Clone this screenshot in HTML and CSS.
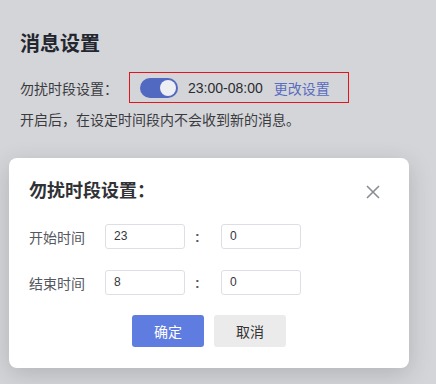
FILE: index.html
```html
<!DOCTYPE html>
<html lang="zh-CN">
<head>
<meta charset="utf-8">
<title>消息设置</title>
<link rel="stylesheet" href="styles.css">
</head>
<body>
<div class="page">
  <h1 class="title">消息设置</h1>
  <div class="row">
    <span class="row-label">勿扰时段设置：</span>
    <div class="highlight">
      <span class="switch"><span class="knob"></span></span>
      <span class="time">23:00-08:00</span>
      <a class="link">更改设置</a>
    </div>
  </div>
  <p class="desc">开启后，在设定时间段内不会收到新的消息。</p>
</div>

<div class="dialog">
  <h2 class="dialog-title">勿扰时段设置：</h2>
  <span class="close">
    <svg width="14" height="14" viewBox="0 0 14 14"><path d="M1 1L13 13M13 1L1 13" stroke="#8a8d93" stroke-width="1.6" fill="none"/></svg>
  </span>
  <div class="form">
    <div class="form-row">
      <span class="form-label">开始时间</span>
      <span class="input">23</span>
      <span class="sep">:</span>
      <span class="input">0</span>
    </div>
    <div class="form-row">
      <span class="form-label">结束时间</span>
      <span class="input">8</span>
      <span class="sep">:</span>
      <span class="input">0</span>
    </div>
  </div>
  <div class="actions">
    <button class="btn btn-primary">确定</button>
    <button class="btn btn-default">取消</button>
  </div>
</div>
</body>
</html>
```

FILE: styles.css
```css
* { box-sizing: border-box; }
html, body {
  margin: 0;
  padding: 0;
}
body {
  width: 436px;
  height: 384px;
  overflow: hidden;
  background: #d4d5d9;
  font-family: "Liberation Sans", "Noto Sans CJK SC", sans-serif;
  color: #2e2f33;
  position: relative;
}
.page {
  padding: 32px 20px 0 20px;
}
.title {
  margin: 0;
  font-size: 20px;
  line-height: 24px;
  font-weight: bold;
  color: #23262e;
}
.row {
  display: flex;
  align-items: center;
  margin-top: 16px;
  font-size: 14px;
}
.row-label {
  color: #3a3b3f;
  width: 109px;
}
.highlight {
  display: flex;
  align-items: center;
  height: 31px;
  width: 220px;
  border: 1px solid #e5141c;
  padding-left: 10px;
}
.switch {
  width: 38px;
  height: 20px;
  border-radius: 10px;
  background: #5169c1;
  display: flex;
  align-items: center;
  justify-content: flex-end;
  padding-right: 2px;
}
.knob {
  width: 16px;
  height: 16px;
  border-radius: 50%;
  background: #eeeff2;
}
.time {
  margin-left: 10px;
  color: #2b2c30;
}
.link {
  margin-left: 11px;
  color: #5a6cbf;
}
.desc {
  margin: 7px 0 0 0;
  font-size: 14px;
  line-height: 20px;
  color: #3a3b3f;
}
.dialog {
  position: absolute;
  left: 9px;
  top: 158px;
  width: 400px;
  height: 210px;
  background: #fff;
  border-radius: 8px;
  box-shadow: 0 6px 24px rgba(0, 0, 0, 0.16);
  padding: 21px 20px 0 20px;
}
.dialog-title {
  margin: 0;
  font-size: 18px;
  line-height: 24px;
  font-weight: bold;
  color: #303236;
}
.close {
  position: absolute;
  right: 29px;
  top: 27px;
  width: 14px;
  height: 14px;
  display: block;
}
.close svg { display: block; }
.form {
  margin-top: 21px;
  display: flex;
  flex-direction: column;
  gap: 21px;
}
.form-row {
  display: flex;
  align-items: center;
  height: 25px;
}
.form-label {
  width: 76px;
  font-size: 14px;
  color: #555860;
}
.input {
  width: 80px;
  height: 25px;
  border: 1px solid #dcdfe6;
  border-radius: 3px;
  padding-left: 8px;
  font-size: 12px;
  line-height: 23px;
  color: #34363b;
}
.sep {
  width: 36px;
  padding-left: 10px;
  font-size: 14px;
  font-weight: bold;
  color: #555860;
}
.actions {
  margin-top: 20px;
  display: flex;
  justify-content: center;
  gap: 10px;
}
.btn {
  width: 72px;
  height: 32px;
  border: none;
  border-radius: 3px;
  font-family: "Liberation Sans", "Noto Sans CJK SC", sans-serif;
  font-size: 14px;
  padding: 0;
}
.btn-primary {
  background: #5f7de0;
  color: #fff;
}
.btn-default {
  background: #ebebeb;
  color: #333;
}
```
